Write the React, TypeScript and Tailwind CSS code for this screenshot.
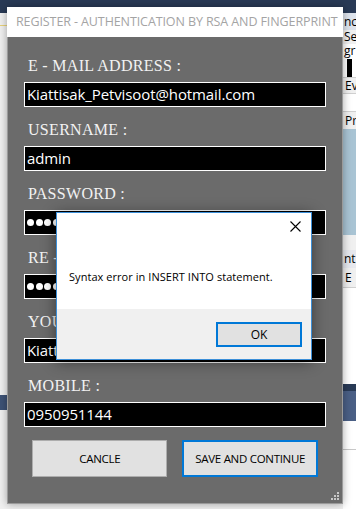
import React from 'react';

const fields = [
  { label: 'E - MAIL ADDRESS :', value: 'Kiattisak_Petvisoot@hotmail.com' },
  { label: 'USERNAME :', value: 'admin' },
  { label: 'PASSWORD :', secret: true },
  { label: 'RE - PASSWORD :', secret: true },
  { label: 'YOUR NAME :', value: 'Kiattisak Petvisoot' },
  { label: 'MOBILE :', value: '0950951144' },
];

function Dots() {
  return (
    <div className="flex h-full items-center gap-[1.5px] pl-[2px]">
      {Array.from({ length: 5 }).map((_, i) => (
        <span key={i} className="h-[7px] w-[7px] rounded-full bg-white" />
      ))}
    </div>
  );
}

function Field({ label, value, secret }: { label: string; value?: string; secret?: boolean }) {
  return (
    <div className="mb-[13px]">
      <div
        className="h-5 pl-[4px] text-[16px] leading-5 tracking-[0.3px] text-[#f2f2f2]"
        style={{ fontFamily: '"Liberation Serif", serif' }}
      >
        {label}
      </div>
      <div className="mt-[6px] h-[25px] border border-white bg-black">
        {secret ? (
          <Dots />
        ) : (
          <div className="pl-[2px] text-[15px] leading-[23px] tracking-[-0.1px] text-white">{value}</div>
        )}
      </div>
    </div>
  );
}

function Desktop() {
  // the app underneath the register window, only its edges show
  return (
    <div className="flex h-[509px] w-[356px] flex-col bg-[#f0f0f0]">
      <div className="h-[13px] bg-[#293a56]" />
      <div className="flex flex-1">
        <div className="w-[343px]">
          <div className="mt-[12px] h-[1px] bg-[#e8d27a]" />
          <div className="mt-[369px] h-[15px] bg-[#3d5275]" />
        </div>
        <div className="flex w-[13px] flex-col overflow-hidden whitespace-nowrap text-[12px] text-black">
          <div className="h-[17px] overflow-hidden bg-[#dde3ec] pl-[1px] leading-[17px]">nc</div>
          <div className="h-[14px] overflow-hidden pl-[1px] leading-[14px]">Se</div>
          <div className="h-[15px] overflow-hidden bg-white pl-[1px] leading-[13px]">gr</div>
          <div className="h-[18px] bg-white pl-[4px]">
            <div className="h-full w-[5px] bg-black" />
          </div>
          <div className="h-[17px] overflow-hidden border-y border-[#d0d0d0] pl-[2px] leading-[15px]">Ev</div>
          <div className="h-[18px] border-b border-[#d0d0d0] bg-white" />
          <div className="h-[17px] overflow-hidden pl-[2px] leading-[17px]">Pr</div>
          <div className="h-[106px] bg-[#a9c4d4]" />
          <div className="h-[15px] bg-[#f0f0f0]" />
          <div className="h-[18px] overflow-hidden bg-[#e6e8ee] pl-[1px] leading-[18px]">nt</div>
          <div className="h-[20px] overflow-hidden border-b border-[#d0d0d0] pl-[2px] leading-[19px]">E</div>
          <div className="h-[96px] bg-white" />
          <div className="h-[7px] bg-[#293a56]" />
          <div className="h-[30px] bg-[#4a5f85]" />
          <div className="h-[29px] border-b border-[#c8c8c8] bg-white" />
          <div className="flex-1 bg-white" />
        </div>
      </div>
    </div>
  );
}

export default function App() {
  return (
    <div className="relative h-[509px] w-[356px] overflow-hidden" style={{ fontFamily: '"Open Sans", "Noto Sans", sans-serif' }}>
      <Desktop />

      {/* register window */}
      <div className="absolute left-[7px] top-[7px] flex h-[497px] w-[336px] flex-col shadow-[0_0_8px_rgba(0,0,0,0.35)]">
        <div className="flex h-[30px] items-center bg-white pl-[9px] text-[12.5px] tracking-[-0.1px] text-[#a4a4a4]">
          REGISTER - AUTHENTICATION BY RSA AND FINGERPRINT
        </div>
        <div className="relative flex-1 border border-t-0 border-[#9a9a9a] bg-[#6b6b6b] px-[16px] pt-[19px]">
          {fields.map((f) => (
            <Field key={f.label} {...f} />
          ))}
          <div className="mt-[6px] flex gap-[15px] px-[8px]">
            <button className="h-[37px] w-[137px] border border-[#adadad] bg-[#e1e1e1] text-[11.5px] tracking-[-0.3px] text-black">
              CANCLE
            </button>
            <button className="h-[37px] w-[137px] border-2 border-[#0078d7] bg-[#e1e1e1] text-[11.5px] tracking-[-0.3px] text-black">
              SAVE AND CONTINUE
            </button>
          </div>
          <svg className="absolute bottom-[3px] right-[3px]" width="8" height="8" viewBox="0 0 8 8">
            <g fill="#c8c8c8">
              <rect x="6" y="0" width="2" height="2" />
              <rect x="3" y="3" width="2" height="2" />
              <rect x="6" y="3" width="2" height="2" />
              <rect x="0" y="6" width="2" height="2" />
              <rect x="3" y="6" width="2" height="2" />
              <rect x="6" y="6" width="2" height="2" />
            </g>
          </svg>
        </div>
      </div>

      {/* message box */}
      <div className="absolute left-[56px] top-[212px] flex h-[148px] w-[256px] flex-col border border-[#3c8fd8] bg-white shadow-[0_2px_14px_rgba(0,0,0,0.45)]">
        <div className="flex h-[96px] flex-col bg-white">
          <div className="flex h-[30px] justify-end pr-[10px] pt-[8px]">
            <svg width="11" height="11" viewBox="0 0 11 11">
              <path d="M0.5 0.5 L10.5 10.5 M10.5 0.5 L0.5 10.5" stroke="#000" strokeWidth="1.1" />
            </svg>
          </div>
          <div className="pl-[12px] pt-[26px] text-[11px] leading-4 tracking-[0.05px] text-black">
            Syntax error in INSERT INTO statement.
          </div>
        </div>
        <div className="flex flex-1 items-start justify-end bg-[#f0f0f0] pr-[9px] pt-[13px]">
          <button className="h-[25px] w-[86px] border-2 border-[#0078d7] bg-[#e1e1e1] text-[12px] text-black">OK</button>
        </div>
      </div>
    </div>
  );
}
